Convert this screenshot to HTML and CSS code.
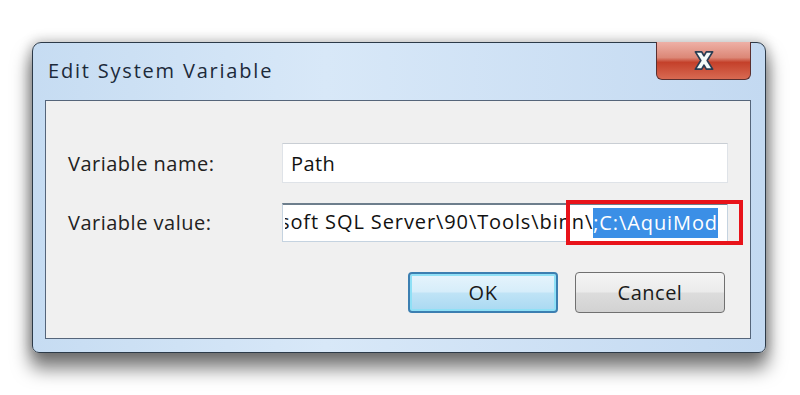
FILE: index.html
```html
<!DOCTYPE html>
<html>
  <head>
    <title>Edit System Variable</title>
    <link rel="stylesheet" href="styles.css">
  </head>
  <body>
    <div class="window">
      <div class="titlebar">
        <h1 class="title">Edit System Variable</h1>
        <div class="close-btn">
          <svg viewBox="0 0 24 20" width="28" height="23">
            <path d="M4.5 2.5h5.5l2 3.5 2-3.5h5.5l-4.7 7.5 4.7 7.5H14l-2-3.5-2 3.5H4.5l4.7-7.5z" fill="#f4fbf8" stroke="#2a3d52" stroke-width="1.5" stroke-linejoin="round" />
          </svg>
        </div>
      </div>

      <div class="content">
        <div class="row">
          <label class="label">Variable name:</label>
          <div class="textbox">
            <span class="value">Path</span>
          </div>
        </div>

        <div class="row">
          <label class="label">Variable value:</label>
          <div class="textbox textbox-focus">
            <div class="scroll-text">
              <span class="value">soft SQL Server\90\Tools\binn\</span><span class="selected">;C:\AquiMod</span>
            </div>
            <!-- marca roja sobre el valor nuevo -->
            <div class="highlight-box"></div>
          </div>
        </div>

        <div class="buttons">
          <button class="btn btn-default">OK</button>
          <button class="btn">Cancel</button>
        </div>
      </div>
    </div>
  </body>
</html>
```

FILE: styles.css
```css
* {
  margin: 0;
  padding: 0;
  box-sizing: border-box;
}

html,
body {
  height: 100%;
}

body {
  font-family: "Open Sans", "DejaVu Sans", sans-serif;
  background: #fff;
  padding: 42px 0 0 32px;
  overflow: hidden;
}

.window {
  width: 734px;
  height: 311px;
  display: flex;
  flex-direction: column;
  padding: 0 14px 13px 12px;
  border: 1px solid #2c3a48;
  border-radius: 9px 9px 7px 7px;
  background: linear-gradient(to right, #c6dcf2 0%, #d8e8f8 40%, #c3d9f1 100%);
  box-shadow: 0 14px 18px 2px rgba(0, 0, 0, 0.5), 0 0 12px 2px rgba(0, 0, 0, 0.22);
}

.titlebar {
  height: 57px;
  display: flex;
  justify-content: space-between;
  align-items: flex-start;
}

.title {
  font-size: 20px;
  font-weight: normal;
  color: #1c2a3a;
  margin: 14px 0 0 3px;
  letter-spacing: 1.8px;
}

.close-btn {
  width: 95px;
  height: 38px;
  margin-top: -1px;
  display: flex;
  align-items: center;
  justify-content: center;
  border: 1px solid #5a3030;
  border-top: none;
  border-radius: 0 0 6px 6px;
  background: linear-gradient(to bottom, #eeb0a6 0%, #dc8877 42%, #c4402a 55%, #d86a52 100%);
}

.content {
  flex: 1;
  background: #f0f0f0;
  border: 1px solid #55657a;
  padding: 42px 22px 0 22px;
}

.row {
  display: flex;
  align-items: center;
  height: 40px;
  margin-bottom: 20px;
}

.row + .row {
  height: 39px;
}

.label {
  width: 214px;
  flex-shrink: 0;
  white-space: nowrap;
  font-size: 20px;
  letter-spacing: 0.5px;
  color: #222;
}

.textbox {
  position: relative;
  flex: 1;
  min-width: 0;
  height: 100%;
  background: #fff;
  border: 1px solid #dfe3e8;
  border-top-color: #c9ced4;
  display: flex;
  align-items: center;
  padding-left: 8px;
  font-size: 20px;
  letter-spacing: 0.4px;
  color: #111;
}

.textbox-focus {
  border-color: #c5d3e0;
  border-top: 2px solid #6d7e8c;
  padding-left: 2px;
}

.scroll-text {
  flex: 1;
  min-width: 0;
  display: flex;
  justify-content: flex-end;
  overflow: hidden;
  white-space: nowrap;
  padding-right: 9px;
  letter-spacing: 0.9px;
}

.scroll-text span {
  flex-shrink: 0;
}

.selected {
  background: #3b8fe6;
  color: #fff;
  line-height: 30px;
}

.highlight-box {
  position: absolute;
  left: 283px;
  top: -5px;
  width: 177px;
  height: 45px;
  border: 4px solid #e8131a;
}

.buttons {
  display: flex;
  justify-content: flex-end;
  gap: 17px;
  margin-top: 10px;
  padding-right: 3px;
}

.btn {
  width: 150px;
  height: 41px;
  margin-top: 10px;
  font-family: inherit;
  font-size: 20px;
  letter-spacing: 0.5px;
  color: #1a1a1a;
  border: 1px solid #707070;
  border-radius: 4px;
  background: linear-gradient(to bottom, #f4f4f4 0%, #ebebeb 48%, #dcdcdc 52%, #d2d2d2 100%);
}

.btn-default {
  border: 2px solid #3c7fb1;
  background: linear-gradient(to bottom, #e6f4fc 0%, #d6edfa 48%, #bfe3f6 52%, #a9d9f2 100%);
  box-shadow: inset 0 0 0 2px #8fe0f6;
}
```
